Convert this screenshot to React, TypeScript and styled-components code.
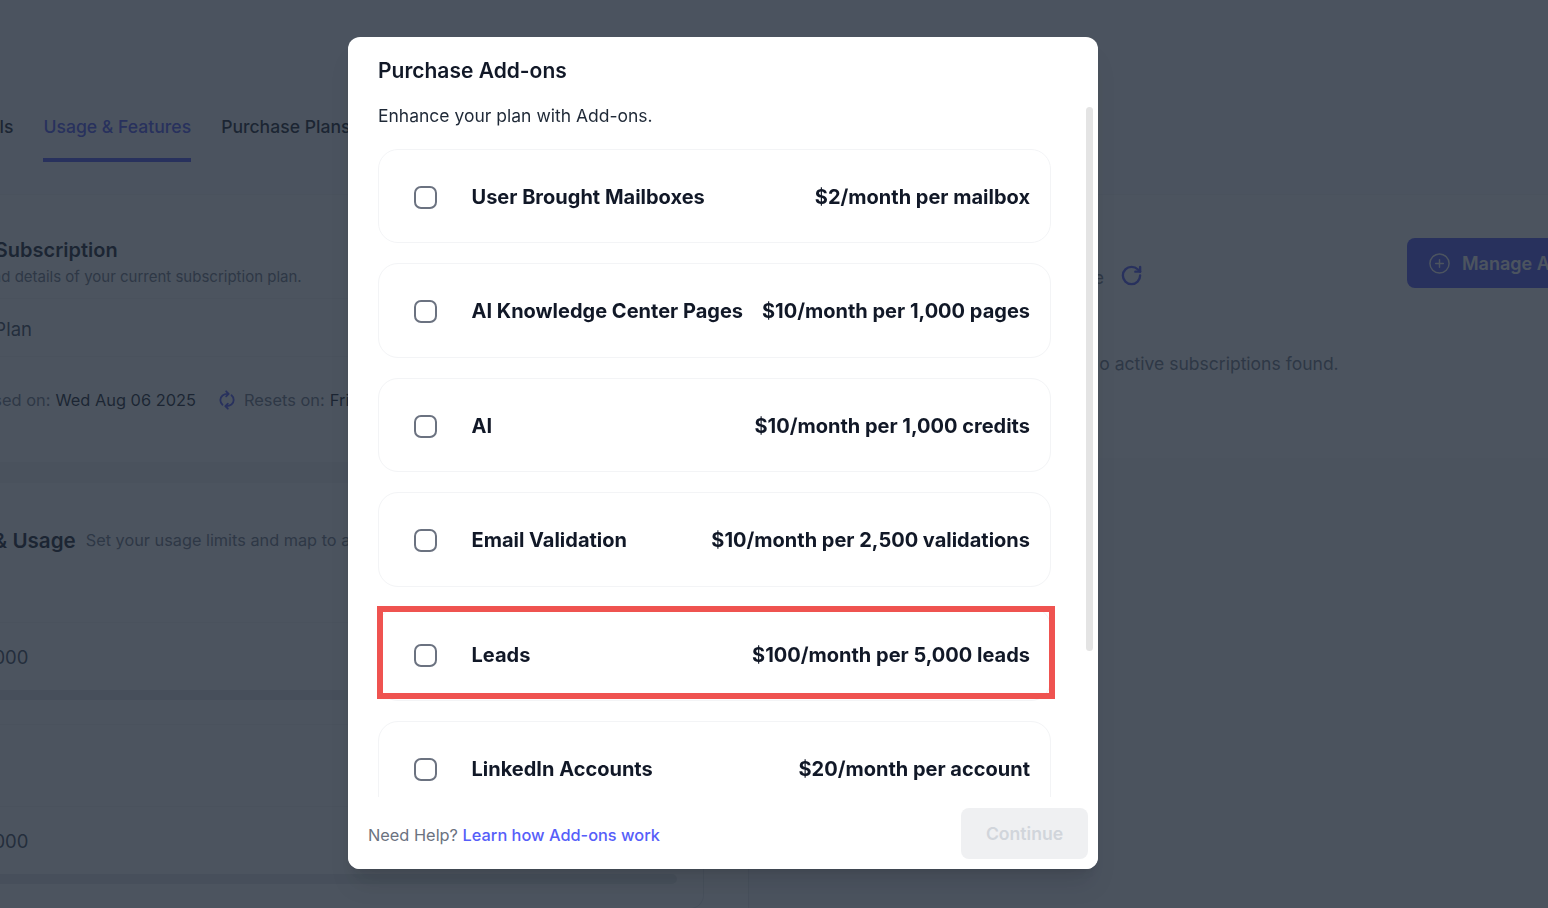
import React from "react";
import styled, { createGlobalStyle } from "styled-components";
import { CirclePlus, RotateCw } from "lucide-react";

const Global = createGlobalStyle`
  html, body { margin: 0; padding: 0; background: #fff; }
  * { box-sizing: border-box; }
  body { font-family: Inter, "Liberation Sans", sans-serif; color: #111827; }
`;

const Page = styled.div`
  width: 1548px;
  height: 908px;
  overflow: hidden;
  display: flex;
  flex-direction: column;
  background: #fff;
`;
const TabBar = styled.nav`
  flex: 0 0 195px;
  display: flex;
  gap: 30px;
  padding: 116px 0 0 0;
  margin-left: -44px;
  border-bottom: 1px solid #f3f4f6;
  background: #fbfbfc;
  width: 1600px;
`;
const Tab = styled.div<{ $active?: boolean }>`
  height: 46px;
  padding-bottom: 20px;
  line-height: 22px;
  font-size: 17.6px;
  font-weight: 500;
  white-space: nowrap;
  color: ${(p) => (p.$active ? "#4b4ff5" : "#111827")};
  border-bottom: 4px solid ${(p) => (p.$active ? "#4b4ff5" : "transparent")};
`;
const Columns = styled.div`
  flex: 1;
  display: flex;
  min-height: 0;
`;
const LeftColumn = styled.section`
  flex: 0 0 749px;
  display: flex;
  flex-direction: column;
  border-right: 1px solid #e5e7eb;
`;
const TopCard = styled.div`
  flex: 0 0 267px;
  padding: 43px 0 0 0;
`;
const Indent = styled.div<{ $x: number }>`
  margin-left: ${(p) => p.$x}px;
`;
const CardTitle = styled.h2<{ $size?: number }>`
  margin: 0;
  font-size: ${(p) => p.$size ?? 20}px;
  line-height: 24px;
  font-weight: 600;
  white-space: nowrap;
`;
const CardSub = styled.p`
  margin: 5px 0 0 -14px;
  font-size: 15px;
  line-height: 20px;
  color: #6b7280;
  white-space: nowrap;
`;
const PlanRow = styled.div`
  margin-top: 11px;
  height: 59px;
  padding-top: 3px;
  border-top: 1px solid #f3f4f6;
  border-bottom: 1px solid #f3f4f6;
  display: flex;
  align-items: center;
  font-size: 18.5px;
  color: #374151;
`;
const MetaRow = styled.div`
  display: flex;
  align-items: center;
  height: 22px;
  margin-top: 32px;
  font-size: 16.4px;
  white-space: nowrap;
  color: #6b7280;
`;
const MetaValue = styled.span`
  color: #111827;
  margin-left: 5px;
`;
const MetaIcon = styled.svg`
  width: 20px;
  height: 22px;
  margin: 0 7px 0 21px;
  fill: none;
  stroke: #4b4ff5;
  stroke-width: 2.2;
  stroke-linecap: round;
  stroke-linejoin: round;
`;
const Band = styled.div`
  flex: 0 0 21px;
  background: #f3f4f6;
  border-top: 1px solid #f3f4f6;
`;
const UsageCard = styled.div`
  flex: 1;
  margin-right: 44px;
  margin-bottom: 1px;
  border-right: 1px solid #e5e7eb;
  border-bottom: 1px solid #e5e7eb;
  border-bottom-right-radius: 14px;
  background: #fff;
  padding-top: 46px;
`;
const UsageHead = styled.div`
  display: flex;
  align-items: flex-start;
  gap: 10px;
  height: 93px;
  margin-left: -71px;
  white-space: nowrap;
`;
const UsageHint = styled.span`
  font-size: 16.3px;
  line-height: 22px;
  color: #6b7280;
`;
const UsageRow = styled.div<{ $h: number }>`
  height: ${(p) => p.$h}px;
  border-top: 1px solid #f3f4f6;
  padding: 23px 26px 0 0;
  font-size: 18.5px;
  line-height: 22px;
  color: #374151;
`;
const UsageValue = styled.div`
  margin-left: -19px;
`;
const Track = styled.div`
  margin-top: 22px;
  height: 10px;
  border-radius: 0 5px 5px 0;
  background: #e5e7eb;
`;
const RightColumn = styled.section`
  flex: 1;
  display: flex;
  flex-direction: column;
  background: #f9fafb;
  min-width: 0;
`;
const RightCard = styled.div`
  flex: 0 0 263px;
  background: #fff;
  padding: 43px 0 0 22px;
`;
const RightHead = styled.div`
  display: flex;
  align-items: flex-start;
  width: 800px;
`;
const StatusGroup = styled.div`
  flex: 0 0 372px;
  height: 50px;
  display: flex;
  justify-content: flex-end;
  align-items: flex-end;
  gap: 16px;
  margin-right: 264px;
  font-size: 17.6px;
  color: #6b7280;
  white-space: nowrap;
  svg { color: #4b4ff5; flex: none; margin-bottom: 1px; }
`;
const ManageButton = styled.button`
  flex: none;
  height: 50px;
  display: flex;
  align-items: center;
  gap: 11px;
  padding: 0 21px;
  border: 0;
  border-radius: 8px;
  background: #4b4ff5;
  color: #fff;
  font: 600 18px Inter, sans-serif;
  white-space: nowrap;
`;
const EmptyNote = styled.p`
  margin: 65px 0 0 315px;
  font-size: 17.55px;
  line-height: 22px;
  color: #6b7280;
  white-space: nowrap;
`;

const Overlay = styled.div`
  position: fixed;
  inset: 0;
  display: flex;
  align-items: center;
  justify-content: center;
  padding: 0 102px 2px 0;
  background: rgba(31, 41, 55, 0.8);
`;
const Modal = styled.div`
  position: relative;
  width: 750px;
  height: 832px;
  display: flex;
  flex-direction: column;
  overflow: hidden;
  border-radius: 12px;
  background: #fff;
  box-shadow: 0 20px 25px -5px rgba(0, 0, 0, 0.1), 0 8px 10px -6px rgba(0, 0, 0, 0.1);
`;
const ModalBody = styled.div`
  flex: 1;
  min-height: 0;
  overflow: hidden;
  padding: 20px 47px 0 30px;
`;
const ModalTitle = styled.h1`
  margin: 0;
  font-size: 21px;
  line-height: 28px;
  font-weight: 600;
  color: #111827;
`;
const ModalSub = styled.p`
  margin: 19px 0 0;
  font-size: 17.5px;
  line-height: 24px;
  color: #1f2937;
`;
const List = styled.div`
  display: flex;
  flex-direction: column;
  gap: 20px;
  margin-top: 20.5px;
`;
const Row = styled.div`
  position: relative;
  flex: 0 0 94.5px;
  display: flex;
  align-items: center;
  padding: 2px 20px 0 35px;
  border: 1px solid #f3f4f6;
  border-radius: 20px;
`;
const Check = styled.span`
  flex: none;
  width: 23px;
  height: 23px;
  border: 2px solid #6b7280;
  border-radius: 7px;
  margin: 1px 34.5px 0 0;
`;
const RowName = styled.span`
  flex: 1;
  font-size: 20px;
  font-weight: 650;
  color: #111827;
  white-space: nowrap;
`;
const RowPrice = styled(RowName)`
  flex: none;
`;
const Highlight = styled.div`
  position: absolute;
  left: -2px;
  top: -2px;
  width: 678px;
  height: 93px;
  border: 6px solid #ef5350;
`;
const Footer = styled.div`
  flex: 0 0 72px;
  display: flex;
  align-items: flex-start;
  justify-content: space-between;
  padding: 11px 10px 0 20px;
  background: #fff;
`;
const Help = styled.div`
  margin-top: 16px;
  font-size: 16.35px;
  line-height: 22px;
  color: #6b7280;
`;
const HelpLink = styled.a`
  color: #565ef9;
  font-weight: 500;
`;
const ContinueButton = styled.button`
  width: 127px;
  height: 51px;
  border: 0;
  border-radius: 8px;
  background: #eff0f2;
  color: #d1d5db;
  font: 600 17.6px Inter, sans-serif;
`;
const ScrollThumb = styled.div`
  position: absolute;
  top: 70px;
  left: 738px;
  width: 7px;
  height: 544px;
  border-radius: 4px;
  background: #e4e4e4;
`;

const addOns = [
  ["User Brought Mailboxes", "$2/month per mailbox"],
  ["AI Knowledge Center Pages", "$10/month per 1,000 pages"],
  ["AI", "$10/month per 1,000 credits"],
  ["Email Validation", "$10/month per 2,500 validations"],
  ["Leads", "$100/month per 5,000 leads"],
  ["LinkedIn Accounts", "$20/month per account"],
];

export default function App() {
  return (
    <>
      <Global />
      <Page>
        <TabBar>
          <Tab>Details</Tab>
          <Tab $active>Usage &amp; Features</Tab>
          <Tab>Purchase Plans</Tab>
        </TabBar>
        <Columns>
          <LeftColumn>
            <TopCard>
              <Indent $x={-84}>
                <CardTitle>Current Subscription</CardTitle>
                <CardSub>Plan status and details of your current subscription plan.</CardSub>
              </Indent>
              <PlanRow>
                <Indent $x={-77}>Current Plan</Indent>
              </PlanRow>
              <Indent $x={-61}>
                <MetaRow>
                  Purchased on:<MetaValue>Wed Aug 06 2025</MetaValue>
                  <MetaIcon viewBox="0 0 24 24">
                    <path d="M13.5 4.6C8 4.2 4 7.6 4 12c0 2.3 1 4.3 2.6 5.6" />
                    <path d="M11 1.6l3 3-3 3" />
                    <path d="M10.5 19.4c5.5.4 9.5-3 9.5-7.4 0-2.3-1-4.3-2.6-5.6" />
                    <path d="M13 22.4l-3-3 3-3" />
                  </MetaIcon>
                  Resets on:<MetaValue>Fri Sep 05 2025</MetaValue>
                </MetaRow>
              </Indent>
            </TopCard>
            <Band />
            <UsageCard>
              <UsageHead>
                <CardTitle $size={20.6}>Limits &amp; Usage</CardTitle>
                <UsageHint>Set your usage limits and map to an add-on.</UsageHint>
              </UsageHead>
              <UsageRow $h={102}>
                <UsageValue>1,000</UsageValue>
                <Track />
              </UsageRow>
              <UsageRow $h={82} />
              <UsageRow $h={102}>
                <UsageValue>1,000</UsageValue>
                <Track />
              </UsageRow>
            </UsageCard>
          </LeftColumn>
          <RightColumn>
            <RightCard>
              <RightHead>
                <StatusGroup>
                  <span>Active usage</span>
                  <RotateCw size={23} strokeWidth={2.5} />
                </StatusGroup>
                <ManageButton>
                  <CirclePlus size={23} strokeWidth={1.5} />
                  Manage Add-ons
                </ManageButton>
              </RightHead>
              <EmptyNote>No active subscriptions found.</EmptyNote>
            </RightCard>
          </RightColumn>
        </Columns>
      </Page>
      <Overlay>
        <Modal>
          <ModalBody>
            <ModalTitle>Purchase Add-ons</ModalTitle>
            <ModalSub>Enhance your plan with Add-ons.</ModalSub>
            <List>
              {addOns.map(([name, price]) => (
                <Row key={name}>
                  <Check />
                  <RowName>{name}</RowName>
                  <RowPrice>{price}</RowPrice>
                  {name === "Leads" && <Highlight />}
                </Row>
              ))}
            </List>
          </ModalBody>
          <Footer>
            <Help>
              Need Help? <HelpLink>Learn how Add-ons work</HelpLink>
            </Help>
            <ContinueButton disabled>Continue</ContinueButton>
          </Footer>
          <ScrollThumb />
        </Modal>
      </Overlay>
    </>
  );
}
